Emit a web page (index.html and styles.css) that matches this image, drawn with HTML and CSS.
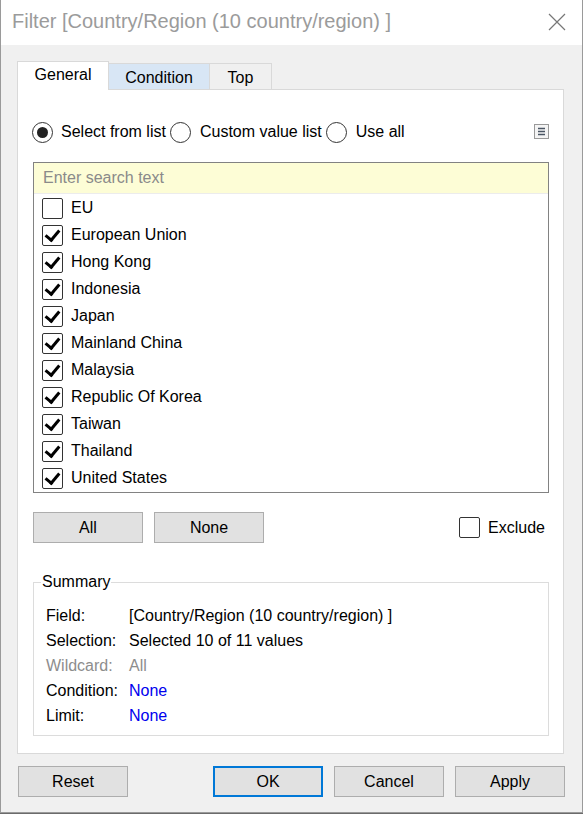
FILE: index.html
```html
<!DOCTYPE html>
<html>
<head>
<meta charset="utf-8">
<link rel="stylesheet" href="styles.css">
</head>
<body>
<div class="window">
  <div class="titlebar">
    <span class="title">Filter [Country/Region (10 country/region) ]</span>
    <svg class="close" width="18" height="18" viewBox="0 0 18 18"><path d="M1 1 L17 17 M17 1 L1 17" stroke="#777" stroke-width="1.2" fill="none"/></svg>
  </div>
  <div class="client">
    <div class="tabs">
      <div class="tab active">General</div>
      <div class="tab hover">Condition</div>
      <div class="tab">Top</div>
    </div>
    <div class="panel">
      <div class="radios">
        <label class="radio"><span class="rbtn on"></span>Select from list</label>
        <label class="radio"><span class="rbtn"></span>Custom value list</label>
        <label class="radio"><span class="rbtn"></span>Use all</label>
        <span class="menu-icon"><svg width="15" height="15" viewBox="0 0 15 15"><rect x="0.5" y="0.5" width="14" height="14" fill="#f4f4f4" stroke="#999"/><path d="M4 4.5h7M4 7.5h7M4 10.5h7" stroke="#4a5563" stroke-width="1.6"/></svg></span>
      </div>
      <div class="listbox">
        <div class="search">Enter search text</div>
        <div class="item"><span class="cb"></span>EU</div>
        <div class="item"><span class="cb checked"></span>European Union</div>
        <div class="item"><span class="cb checked"></span>Hong Kong</div>
        <div class="item"><span class="cb checked"></span>Indonesia</div>
        <div class="item"><span class="cb checked"></span>Japan</div>
        <div class="item"><span class="cb checked"></span>Mainland China</div>
        <div class="item"><span class="cb checked"></span>Malaysia</div>
        <div class="item"><span class="cb checked"></span>Republic Of Korea</div>
        <div class="item"><span class="cb checked"></span>Taiwan</div>
        <div class="item"><span class="cb checked"></span>Thailand</div>
        <div class="item"><span class="cb checked"></span>United States</div>
      </div>
      <div class="list-actions">
        <button class="btn">All</button>
        <button class="btn">None</button>
        <label class="exclude"><span class="cb"></span>Exclude</label>
      </div>
      <fieldset class="summary">
        <legend>Summary</legend>
        <div class="srow"><span class="slabel">Field:</span><span>[Country/Region (10 country/region) ]</span></div>
        <div class="srow"><span class="slabel">Selection:</span><span>Selected 10 of 11 values</span></div>
        <div class="srow dim"><span class="slabel">Wildcard:</span><span>All</span></div>
        <div class="srow"><span class="slabel">Condition:</span><span class="link">None</span></div>
        <div class="srow"><span class="slabel">Limit:</span><span class="link">None</span></div>
      </fieldset>
    </div>
    <div class="footer">
      <button class="btn">Reset</button>
      <div class="footer-right">
        <button class="btn default">OK</button>
        <button class="btn">Cancel</button>
        <button class="btn">Apply</button>
      </div>
    </div>
  </div>
</div>
</body>
</html>
```
FILE: styles.css
```css
* { box-sizing: border-box; }
html, body { margin: 0; padding: 0; }
body {
  width: 583px;
  height: 814px;
  overflow: hidden;
  background: #6b6b6b;
  font-family: "Liberation Sans", Arial, sans-serif;
  font-size: 16px;
  color: #000;
}
.window {
  width: 583px;
  height: 813px;
  border: 1px solid #9a9a9a;
  border-top: none;
  background: #f0f0f0;
  display: flex;
  flex-direction: column;
}
.titlebar {
  height: 45px;
  background: #fff;
  display: flex;
  align-items: center;
  justify-content: space-between;
  padding: 0 16px 0 11px;
}
.title {
  color: #9b9b9b;
  font-size: 20px;
  margin-top: -2px;
}
.close { margin-top: -2px; }
.client {
  flex: 1;
  padding: 16px 18px 0 16px;
  display: flex;
  flex-direction: column;
}
.tabs {
  display: flex;
  align-items: flex-end;
  height: 28px;
  padding-left: 1px;
}
.tab {
  height: 26px;
  border: 1px solid #d9d9d9;
  border-bottom: none;
  margin-left: -1px;
  display: flex;
  align-items: center;
  justify-content: center;
  font-size: 16px;
  background: #f0f0f0;
  padding-top: 2px;
}
.tab:nth-child(1) { width: 92px; }
.tab:nth-child(2) { width: 102px; }
.tab:nth-child(3) { width: 63px; }
.tab.active {
  height: 29px;
  background: #fff;
  margin-bottom: -1px;
  position: relative;
  z-index: 1;
  padding-top: 0;
  padding-bottom: 3px;
}
.tab.hover { background: #d8e6f5; }
.panel {
  height: 665px;
  background: #fff;
  border: 1px solid #d9d9d9;
  padding: 0 14px 0 15px;
  display: flex;
  flex-direction: column;
}
.radios {
  display: flex;
  align-items: center;
  height: 22px;
  margin-top: 31px;
}
.radio {
  display: flex;
  align-items: center;
  white-space: nowrap;
  margin-right: 4px;
}
.rbtn {
  width: 21px;
  height: 21px;
  border: 1px solid #333;
  border-radius: 50%;
  margin-right: 8px;
  display: inline-flex;
  align-items: center;
  justify-content: center;
  background: #fff;
}
.rbtn.on::after {
  content: "";
  width: 11px;
  height: 11px;
  border-radius: 50%;
  background: #222;
}
.radio:nth-child(1) { margin-left: -1px; }
.radio:nth-child(2) .rbtn { margin-right: 9px; }
.radio:nth-child(3) .rbtn { margin-right: 9px; }
.menu-icon {
  margin-left: auto;
  display: flex;
  margin-top: -1px;
}
.listbox {
  margin-top: 19px;
  border: 1px solid #828282;
  height: 331px;
}
.search {
  height: 31px;
  background: #fdfdd6;
  border-bottom: 1px solid #ececec;
  color: #8a8a8a;
  padding-left: 9px;
  display: flex;
  align-items: center;
}
.item {
  height: 27px;
  display: flex;
  align-items: center;
  padding-left: 8px;
  padding-top: 1px;
}
.cb {
  width: 21px;
  height: 21px;
  border: 1px solid #333;
  border-radius: 2px;
  margin-right: 8px;
  background: #fff;
  display: inline-flex;
  align-items: center;
  justify-content: center;
  flex: none;
}
.cb.checked::after {
  content: "";
  width: 6px;
  height: 11px;
  border-right: 3px solid #000;
  border-bottom: 3px solid #000;
  transform: rotate(40deg);
  margin-top: -3px;
}
.list-actions {
  display: flex;
  align-items: center;
  margin-top: 19px;
  height: 31px;
}
.btn {
  font-family: inherit;
  font-size: 16px;
  width: 110px;
  height: 31px;
  background: #e1e1e1;
  border: 1px solid #adadad;
  color: #000;
  padding: 0;
  margin: 0;
}
.list-actions .btn + .btn { margin-left: 11px; }
.exclude {
  margin-left: auto;
  margin-right: 4px;
  display: flex;
  align-items: center;
}
.exclude .cb { margin-right: 8px; }
.summary {
  margin: 30px 0 0 0;
  border: 1px solid #dcdcdc;
  padding: 12px 0 0 12px;
  height: 163px;
}
.summary legend {
  padding: 0 1px;
  margin-left: -5px;
}
.srow {
  height: 25px;
  display: flex;
  align-items: center;
}
.slabel { width: 83px; }
.srow.dim { color: #8d8d8d; }
.link { color: #0000ee; }
.footer {
  display: flex;
  justify-content: space-between;
  margin-top: 12px;
  padding-left: 1px;
  margin-right: -1px;
}
.footer-right { display: flex; gap: 11px; }
.btn.default { border: 2px solid #0078d7; }
```
